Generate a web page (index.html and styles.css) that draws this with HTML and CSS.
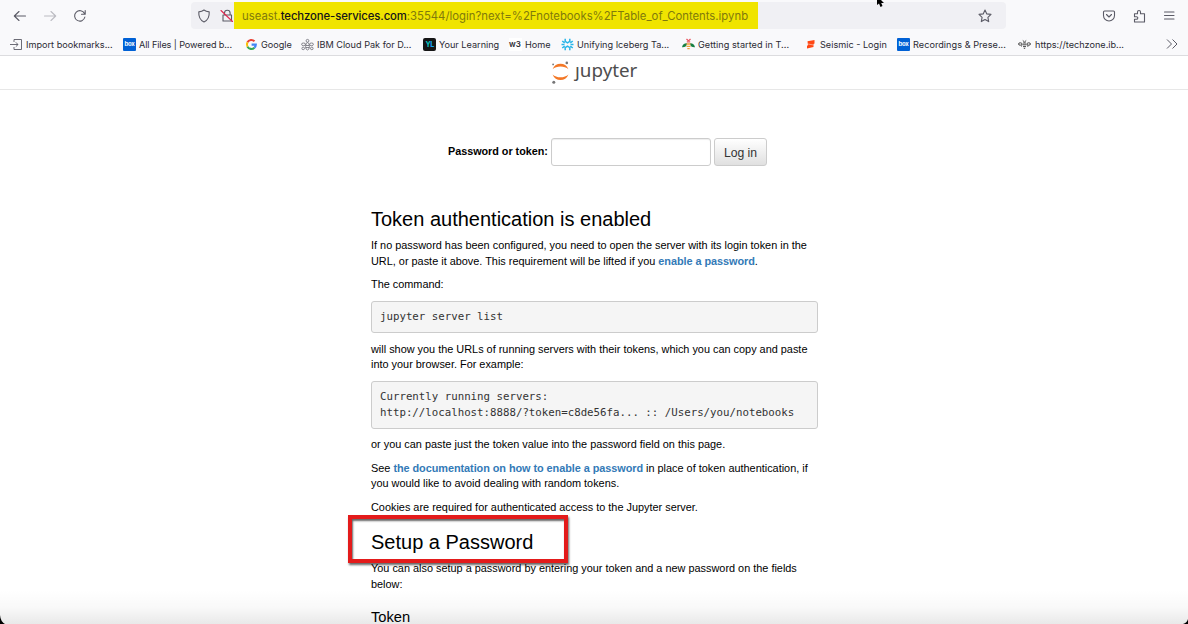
FILE: index.html
```html
<!DOCTYPE html>
<html lang="en">
<head>
<meta charset="utf-8">
<title>Jupyter Server</title>
<link rel="stylesheet" href="styles.css">
</head>
<body>
<div class="window">
  <header class="browser">
    <div class="toolbar">
      <div class="nav">
        <svg class="icon" viewBox="0 0 14 14"><path d="M12.500 7H1.500M6 2.500 1.300 7 6 11.500"/></svg>
        <svg class="icon faded" viewBox="0 0 14 14"><path d="M1.500 7h11M8 2.500 12.700 7 8 11.500"/></svg>
        <svg class="icon" viewBox="0 0 14 14"><path d="M11.500 4.600A5.200 5.200 0 1 0 11.900 8M12.200 1.500v3.700H8.500"/></svg>
      </div>
      <div class="urlbar">
        <svg class="icon shield" viewBox="0 0 14 14"><path d="M7 1c1.600 1.300 3.300 1.700 5.200 1.900C12.500 7.500 11.500 11 7 13 2.500 11 1.500 7.500 1.800 2.900 3.700 2.700 5.400 2.300 7 1z"/></svg>
        <svg class="icon lock" viewBox="0 0 14 14"><path d="M3 6h8.500v6H3zM4.500 6V4a2.800 2.800 0 0 1 5.600 0v2"/><path class="strike" d="M1 1.500 12.500 12.500"/></svg>
        <div class="address"><span class="url">useast.<b>techzone-services.com</b>:35544/login?next=%2Fnotebooks%2FTable_of_Contents.ipynb</span></div>
        <svg class="icon star" viewBox="0 0 14 14"><path d="m7 1 1.800 3.900 4.200.5-3.100 2.900.8 4.300L7 10.500l-3.700 2.100.8-4.300L1 5.400l4.200-.5z"/></svg>
      </div>
      <div class="tools">
        <svg class="icon" viewBox="0 0 14 14"><path d="M2.500 2h9q1 0 1 1v3.500a5.500 5.500 0 0 1-11 0V3q0-1 1-1zM4.500 5.500 7 8l2.500-2.500"/></svg>
        <svg class="icon" viewBox="0 0 14 14"><path d="M2.500 4.800h3V3a1.500 1.500 0 0 1 3 0v1.800h4V13h-10v-2.700h2a1.300 1.300 0 0 0 0-2.600h-2z"/></svg>
        <svg class="icon" viewBox="0 0 14 14"><path d="M2.500 3h9.500M2.500 6.500H12M2.500 10H12"/></svg>
      </div>
    </div>
    <nav class="bookmarks">
      <div class="bm w113"><svg class="fav" viewBox="0 0 13 13"><g class="line"><path d="M4 4V1.500h7.500v10H4V9M0 6.500h8M5.800 4.300 8 6.500 5.800 8.700"/></g></svg><span>Import bookmarks...</span></div>
      <div class="bm w122"><span class="fav box">box</span><span class="tight">All Files | Powered b...</span></div>
      <div class="bm w56"><svg class="fav" viewBox="0 0 13 13"><g fill="none" stroke-width="2.100"><path stroke="#ea4335" d="M2.500 4.300A4.400 4.400 0 0 1 9.500 3.300"/><path stroke="#fbbc05" d="M2.500 4.300a4.400 4.400 0 0 0 0 4.400"/><path stroke="#34a853" d="M2.500 8.700a4.400 4.400 0 0 0 6.900 1"/><path stroke="#4285f4" d="M9.400 9.700a4.400 4.400 0 0 0 1.400-3.100H6.600"/></g></svg><span>Google</span></div>
      <div class="bm w122"><svg class="fav" viewBox="0 0 13 13"><g class="line thin"><circle cx="6.500" cy="2.800" r="1.400"/><ellipse cx="6.500" cy="8.300" rx="1.900" ry="3.700"/><ellipse cx="2.500" cy="6.300" rx="2" ry="1.300"/><ellipse cx="10.500" cy="6.300" rx="2" ry="1.300"/><circle cx="2.200" cy="10.400" r="1.300"/><circle cx="10.800" cy="10.400" r="1.300"/><path d="M4.700 7.500h3.600M4.700 9.500h3.600"/></g></svg><span>IBM Cloud Pak for D...</span></div>
      <div class="bm w86"><span class="fav yl"><i>Y</i>L</span><span>Your Learning</span></div>
      <div class="bm w52"><span class="fav w3">w3</span><span>Home</span></div>
      <div class="bm w121"><svg class="fav" viewBox="0 0 13 13"><path fill="none" stroke="#29b5e8" stroke-width="1.500" d="M4.200.8v2.500l2.300 1.500 2.300-1.500V.8M1.200 3l2.500 1.800M11.800 3 9.300 4.800M.5 6.500h3M12.500 6.500h-3M1.200 10l2.500-1.800M11.800 10 9.300 8.200M4.200 12.200V9.700l2.300-1.500 2.300 1.500v2.500"/></svg><span>Unifying Iceberg Ta...</span></div>
      <div class="bm w122"><svg class="fav" viewBox="0 0 13 13"><path fill="#168044" d="M5 5.200C2.500 5 .5 6.500 0 9.300c2.800.2 4.800-1.200 5-3.300zM8 5.200c2.500-.2 4.500 1.300 5 4.100-2.800.2-4.800-1.200-5-3.300z"/><path fill="none" stroke="#e8505b" stroke-width="1.200" d="M4.500 1 6 2.500h1L8.500 1M4.800 3.800h3.400"/><path fill="none" stroke="#f0a13b" stroke-width="1.300" d="M4.500 6h4M4.500 8.300h4M5.300 10.600h2.400"/></svg><span class="wide">Getting started in T...</span></div>
      <div class="bm w93"><svg class="fav" viewBox="0 0 13 13"><path fill="#ff4713" d="M3.500 3.200 10.500 2v3.500L9.500 6v3L3 10.500V7.800l1-.5z"/><path stroke="#f9f9fb" stroke-width=".5" d="m4 6 5.500 1"/></svg><span>Seismic - Login</span></div>
      <div class="bm w121"><span class="fav box">box</span><span class="wide">Recordings &amp; Prese...</span></div>
      <div class="bm last"><svg class="fav" viewBox="0 0 13 13"><g class="line dark"><ellipse cx="2.300" cy="6" rx="1.800" ry="1.200"/><ellipse cx="10.700" cy="6" rx="1.800" ry="1.200"/><path d="M4.800 2.500 6.500 4l1.700-1.500M5 5h3M4.500 6.800h4M5 8.600h3M5.800 10.300h1.400M3 8h1M9 8h1.500"/></g></svg><span class="loose">https://techzone.ib...</span></div>
      <svg class="more" viewBox="0 0 12 12"><path d="m1 1.500 4.500 4.500L1 10.500M6.500 1.500 11 6l-4.500 4.500"/></svg>
    </nav>
  </header>

  <div class="brand">
    <svg class="mark" viewBox="0 0 20 24"><path fill="#f37726" d="M1.600 9.200C3 5.500 6 3.700 9.500 3.700s6.500 1.800 7.900 5.500C15.500 7.300 12.700 6.400 9.500 6.400S3.500 7.300 1.600 9.200zM1.600 14.500c1.900 1.900 4.700 2.800 7.900 2.800s6-.9 7.900-2.800c-1.400 3.700-4.400 5.600-7.900 5.600s-6.500-1.900-7.900-5.600z"/><circle cx="15.800" cy="2.900" r="1.300" fill="#767677"/><circle cx="2.800" cy="22.300" r="1.500" fill="#767677"/><circle cx="2.100" cy="4.400" r=".9" fill="#767677"/></svg>
    <span class="wordmark">ȷupyter</span>
  </div>

  <form class="login">
    <label for="password">Password or token:</label>
    <input id="password" type="password">
    <button type="button">Log in</button>
  </form>

  <main class="content">
    <h3 class="title">Token authentication is enabled</h3>
    <p>If no password has been configured, you need to open the server with its login token in the<br>URL, or paste it above. This requirement will be lifted if you <a>enable a password</a>.</p>
    <p>The command:</p>
    <pre>jupyter server list</pre>
    <p>will show you the URLs of running servers with their tokens, which you can copy and paste<br>into your browser. For example:</p>
    <pre>Currently running servers:
http://localhost:8888/?token=c8de56fa... :: /Users/you/notebooks</pre>
    <p>or you can paste just the token value into the password field on this page.</p>
    <p>See <a>the documentation on how to enable a password</a> in place of token authentication, if<br>you would like to avoid dealing with random tokens.</p>
    <p>Cookies are required for authenticated access to the Jupyter server.</p>
    <h3 class="setup">Setup a Password<i class="callout"></i></h3>
    <p>You can also setup a password by entering your token and a new password on the fields<br>below:</p>
    <h4>Token</h4>
  </main>
  <div class="shade"></div>
  <svg class="corner left" viewBox="0 0 5 9"><path d="M0 0Q.5 6.500 5 9H0z"/></svg>
  <svg class="corner right" viewBox="0 0 5 9"><path d="M5 4Q4 8 0 9h5z"/></svg>
  <svg class="cursor" viewBox="0 0 9 9"><path d="M0 0v5l2-1.500L3.500 7l2-1-1.300-3H7L4 0z"/></svg>
</div>
</body>
</html>
```
FILE: styles.css
```css
* { box-sizing: border-box; }
body { margin: 0; background: #fff; color: #000; font-family: "Liberation Sans", Arial, sans-serif; }
.window { position: relative; width: 1188px; height: 624px; overflow: hidden; }
svg { display: block; flex: none; }

.browser { height: 56px; background: #f9f9fb; border-bottom: 1px solid #dcdcdf; font-family: Inter, sans-serif; }
.toolbar { display: flex; height: 32px; align-items: center; }
.nav { display: flex; width: 191px; padding-left: 13px; gap: 16px; }
.icon { width: 14px; height: 14px; fill: none; stroke: #5b5b66; stroke-width: 1.1; stroke-linecap: round; stroke-linejoin: round; }
.faded { stroke: #bcbcc2; }
.urlbar { display: flex; width: 815px; height: 27px; margin-top: -1px; align-items: center; background: #f0f0f4; border-radius: 4px; }
.shield { margin-left: 6px; }
.lock { margin: 0 0 0 9px; }
.strike { stroke: #e22850; }
.address { display: flex; align-items: center; width: 524px; height: 27px; padding-left: 8px; background: #f0e400; color: #807a0c; font-size: 11.3px; white-space: nowrap; }
.url { letter-spacing: .015px; padding-top: 1px; }
.url b { color: #15141a; font-weight: 500; letter-spacing: -.09px; }
.star { margin-left: auto; margin-right: 14px; }
.tools { display: flex; gap: 16px; margin-left: 96px; }

.bookmarks { display: flex; height: 24px; align-items: center; padding-left: 10px; color: #2b2a33; font-size: 9.15px; white-space: nowrap; }
.bm { display: flex; flex: none; align-items: center; gap: 3px; }
.tight { letter-spacing: -.1px; }
.wide { letter-spacing: .04px; }
.loose { margin-left: 1px; }
.w113 { width: 113px; }
.w122 { width: 122px; }
.w56 { width: 56px; }
.w86 { width: 86px; }
.w52 { width: 52px; }
.w121 { width: 121px; }
.w93 { width: 93px; }
.last { width: 148px; }
.fav { width: 13px; height: 13px; flex: none; }
.line { fill: none; stroke: #5b5b66; stroke-width: .9; }
.thin { stroke-width: .7; }
.dark { stroke: #333; }
.box { background: #0061d5; border-radius: 1px; color: #fff; font-size: 6px; font-weight: 700; line-height: 12px; text-align: center; letter-spacing: -.3px; }
.yl { background: #161616; border-radius: 2px; color: #18a4f4; font-size: 7px; font-weight: 800; line-height: 13px; text-align: center; letter-spacing: -.5px; }
.yl i { color: #08bdba; font-style: normal; }
.w3 { background: #fff; font-size: 8px; font-weight: 600; line-height: 13px; }
.more { width: 12px; height: 12px; fill: none; stroke: #5b5b66; }

.brand { display: flex; height: 34px; padding-left: 551px; border-bottom: 1px solid #e7e7e7; }
.mark { width: 20px; height: 24px; margin-top: 4px; }
.wordmark { margin-left: 4px; margin-top: 2px; font-family: "Noto Sans", sans-serif; font-size: 18.8px; line-height: 25px; color: #4e4e4e; }

.login { display: flex; align-items: center; height: 28px; margin-top: 48px; padding-left: 448px; }
.login label { width: 103px; font-size: 10.8px; letter-spacing: -.02px; font-weight: 700; white-space: nowrap; margin-top: -2px; }
.login input { width: 160px; height: 28px; padding: 0; border: 1px solid #ccc; border-radius: 3px; background: #fff; box-shadow: inset 0 1px 1px rgba(0,0,0,.07); }
.login button { width: 53px; height: 28px; margin-left: 3px; padding: 1px 0 0; border: 1px solid #ccc; border-radius: 3px; background: linear-gradient(#fff, #e0e0e0); color: #333; font: 12.2px "Liberation Sans", sans-serif; }

.content { width: 447px; margin: 42px 0 0 371px; font-size: 10.9px; line-height: 15.6px; }
.content p { margin: 0 0 7.9px; white-space: nowrap; }
.content a { color: #337ab7; font-weight: 700; letter-spacing: -.06px; }
h3 { margin: 0; font-size: 20px; font-weight: 400; line-height: 22px; white-space: nowrap; }
.title { margin-bottom: 8px; }
pre { margin: 0 0 8.6px; padding: 7.5px 8px; border: 1px solid #ccc; border-radius: 3px; background: #f5f5f5; color: #333; font-family: "DejaVu Sans Mono", monospace; font-size: 10.75px; line-height: 15.5px; }
.setup { position: relative; margin: 15.5px 0 8px; }
.callout { position: absolute; left: -23px; top: -16px; width: 220px; height: 48px; border: 4px solid #e31b1b; box-shadow: 1px 2px 2px rgba(0,0,0,.6), inset 1px 2px 2px rgba(0,0,0,.6); }
h4 { margin: 15.5px 0 0; font-size: 14.7px; font-weight: 400; line-height: 18px; }

.shade { position: absolute; left: 0; right: 0; bottom: 0; height: 34px; background: linear-gradient(rgba(0,0,0,0), rgba(0,0,0,.025) 50%, rgba(0,0,0,.085)); }
.corner { position: absolute; bottom: 0; width: 5px; height: 9px; }
.left { left: 0; }
.right { right: 0; }
.cursor { position: absolute; left: 877px; top: 0; width: 9px; height: 9px; }
```
